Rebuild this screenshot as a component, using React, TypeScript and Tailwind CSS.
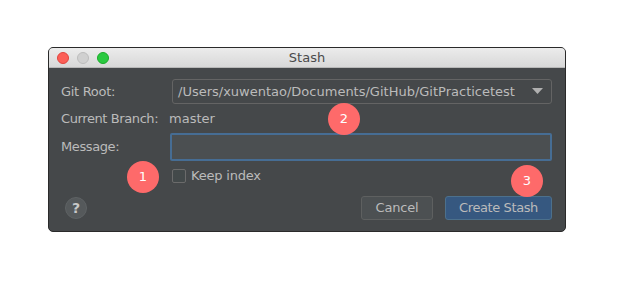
import React from 'react';

const FONT = { fontFamily: '"DejaVu Sans", "Liberation Sans", sans-serif' };

const Badge = ({ n, className }: { n: string; className: string }) => (
    <div className={`absolute w-[32px] h-[32px] rounded-full bg-[#fe6a6a] text-white text-[13px] flex items-center justify-center ${className}`}>
        {n}
    </div>
);

export default function App() {
    return (
        <div className="relative w-[629px] h-[294px] bg-white" style={FONT}>
            <div className="absolute left-[48px] top-[47px] w-[518px] h-[185px] rounded-[5px] border border-[#2a2a2a] overflow-hidden flex flex-col bg-[#45484a]">
                {/* title bar */}
                <div className="h-[20px] flex items-center relative bg-gradient-to-b from-[#ececec] to-[#d8d8d8] border-b border-[#b8b8b8]">
                    <div className="flex gap-[8px] pl-[8px]">
                        <span className="w-[12px] h-[12px] rounded-full bg-[#fc5f57] border border-[#e0443e]" />
                        <span className="w-[12px] h-[12px] rounded-full bg-[#d0d0d0] border border-[#bcbcbc]" />
                        <span className="w-[12px] h-[12px] rounded-full bg-[#2ac940] border border-[#1aab29]" />
                    </div>
                    <span className="absolute left-0 right-0 text-center text-[13px] text-[#4a4a4a]">Stash</span>
                </div>

                <div className="flex-1 flex flex-col pl-[12px] pr-[13px] pt-[11px] text-[13px] text-[#bbbbbb]">
                    <div className="flex items-center h-[25px]">
                        <span className="w-[111px] tracking-[-0.3px]">Git Root:</span>
                        <div className="flex-1 h-[25px] border border-[#646464] rounded-[3px] flex items-center justify-between pl-[5px] pr-[8px]">
                            <span className="text-[13px]">/Users/xuwentao/Documents/GitHub/GitPracticetest</span>
                            <svg width="11" height="7" viewBox="0 0 11 7"><path d="M0 0 H11 L5.5 6 Z" fill="#b0b0b0" /></svg>
                        </div>
                    </div>
                    <div className="flex items-center h-[29px]">
                        <span className="w-[108px] tracking-[-0.4px]">Current Branch:</span>
                        <span>master</span>
                    </div>
                    <div className="flex items-center h-[28px]">
                        <span className="w-[109px] tracking-[-0.4px]">Message:</span>
                        <div className="flex-1 h-[28px] border-2 border-[#466d94] rounded-[2px] bg-[#4b4f51]" />
                    </div>
                    <div className="flex items-center h-[30px] pl-[111px] gap-[5px]">
                        <span className="w-[14px] h-[14px] rounded-[2px] border border-[#6b6b6b] bg-[#43494a]" />
                        <span className="tracking-[-0.2px]">Keep index</span>
                    </div>
                    <div className="flex items-center justify-between mt-[5px]">
                        <div className="ml-[4px] w-[22px] h-[22px] rounded-full bg-[#55595b] border border-[#5e6264] flex items-center justify-center text-[14px] text-[#c8c8c8] font-bold">?</div>
                        <div className="flex gap-[12px]">
                            <button className="w-[72px] h-[24px] rounded-[3px] bg-[#4c5052] border border-[#5e6060] text-[13px] text-[#bbbbbb] tracking-[-0.2px]">Cancel</button>
                            <button className="w-[107px] h-[24px] rounded-[3px] bg-[#365880] border border-[#4c708c] text-[13px] text-[#bbbbbb] tracking-[-0.4px]">Create Stash</button>
                        </div>
                    </div>
                </div>
            </div>

            <Badge n="1" className="left-[127px] top-[161px]" />
            <Badge n="2" className="left-[328px] top-[103px]" />
            <Badge n="3" className="left-[511px] top-[165px]" />
        </div>
    );
}
